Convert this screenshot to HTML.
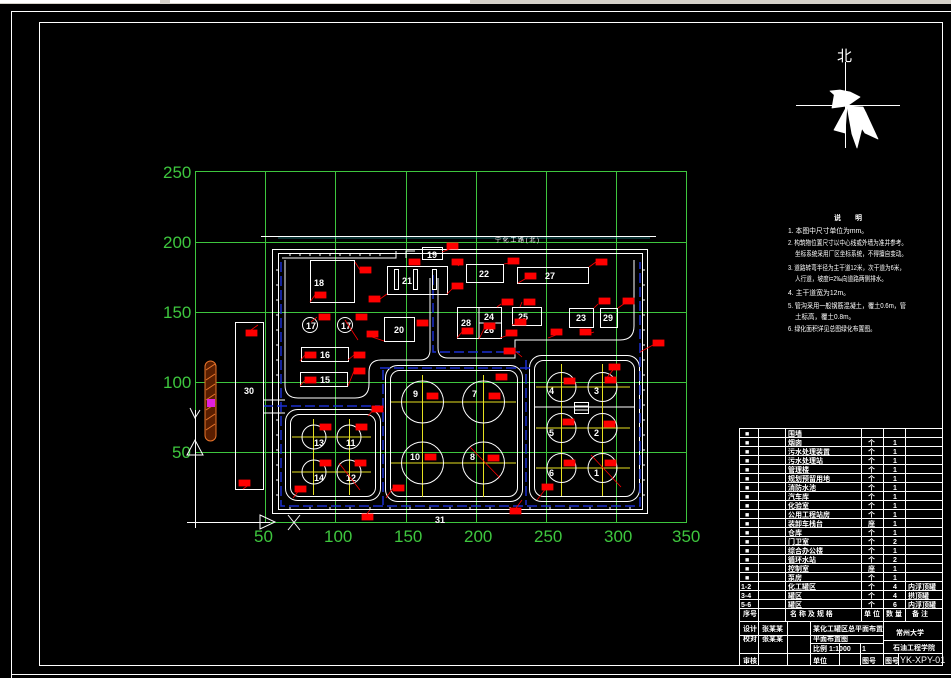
<!DOCTYPE html>
<html><head><meta charset="utf-8"><style>
html,body{margin:0;padding:0;background:#000;width:951px;height:678px;overflow:hidden}
svg{display:block}
text{font-family:"Liberation Sans","Noto Sans CJK SC",sans-serif}
</style></head><body>
<svg width="951" height="678" viewBox="0 0 951 678" xmlns="http://www.w3.org/2000/svg">
<rect width="951" height="678" fill="#000"/>
<rect x="0" y="0" width="951" height="4" fill="#d4d0c8"/>
<rect x="0" y="0" width="160" height="3" fill="#fff"/>
<rect x="170" y="0" width="300" height="3" fill="#fff"/>
<!-- frames -->
<path d="M11.5 678V11.5H951M11 674.5H951" fill="none" stroke="#fff" stroke-width="1"/>
<rect x="39.5" y="22.5" width="903" height="643" fill="none" stroke="#fff" stroke-width="1"/>

<!-- green grid -->
<g stroke="#3ec63e" stroke-width="1" fill="none">
<rect x="195.5" y="171.5" width="491" height="351"/>
<path d="M265.5 171V523M335.5 171V523M406.5 171V523M476.5 171V523M546.5 171V523M616.5 171V523M195 242.5H687M195 312.5H687M195 382.5H687M195 452.5H687"/>
</g>
<g fill="#3ec63e" font-size="17" font-family="Liberation Sans">
<text x="163" y="178">250</text><text x="163" y="248">200</text><text x="163" y="318">150</text><text x="163" y="388">100</text><text x="172" y="458">50</text>
<text x="254" y="542">50</text><text x="324" y="542">100</text><text x="394" y="542">150</text><text x="464" y="542">200</text><text x="534" y="542">250</text><text x="604" y="542">300</text><text x="672" y="542">350</text>
</g>
<!-- axis -->
<g stroke="#fff" fill="none" stroke-width="1">
<path d="M195.5 410V528M187 522.5H270"/>
<path d="M187 455L195 440L203 455Z"/>
<path d="M260 515L275 522L260 529Z"/>
<path d="M288 515L300 530M300 515L288 530"/>
<path d="M190 408L195 418L200 410"/>
</g>

<path d="M261 236.5H656" stroke="#fff" stroke-width="1"/>
<path d="M278 238H650" stroke="#2aa" stroke-width="1" opacity=".6"/>
<text x="495" y="242" fill="#fff" font-size="6">宁 化 工 路 ( 北 )</text>

<g fill="none" stroke="#fff" stroke-width="1">
<rect x="272.5" y="249.5" width="375" height="264"/>
<rect x="278.5" y="253.5" width="364" height="256"/>
<path d="M282 258H396V251M406 258V251H415"/>
<path d="M285 260V385Q285 398 298 398H355Q369 398 369 384V372Q369 360 381 360H420Q430 360 430 350V278"/>
<path d="M438 278V348Q438 358 448 358H515V340H620Q634 340 634 326V260"/>
<rect x="285.5" y="409.5" width="95" height="91" rx="12"/>
<rect x="290.5" y="414.5" width="85" height="82" rx="9"/>
<rect x="385.5" y="365.5" width="137" height="136" rx="12"/>
<rect x="390.5" y="370.5" width="127" height="126" rx="9"/>
<rect x="529.5" y="355.5" width="110" height="146" rx="12"/>
<rect x="534.5" y="360.5" width="100" height="136" rx="9"/>
<path d="M263 400H285M263 413H285"/>
</g>
<g fill="none" stroke="#1a2fd0" stroke-width="1.5" stroke-dasharray="10 4">
<path d="M281 262V506H640V262"/>
<path d="M433 275V352H520"/>
<path d="M263 406H380M380 368H530"/>
<path d="M526 360V505M383 370V505"/>
</g>
<g stroke="#fff" stroke-width="1">
<path d="M276 270h3M276 285h3M276 300h3M276 315h3M276 330h3M276 345h3M276 360h3M276 375h3M276 420h3M276 435h3M276 450h3M276 465h3M276 480h3M276 495h3"/>
<path d="M642 270h3M642 285h3M642 300h3M642 315h3M642 330h3M642 345h3M642 360h3M642 375h3M642 390h3M642 405h3M642 420h3M642 435h3M642 450h3M642 465h3M642 480h3M642 495h3"/>
<path d="M290 253v3M300 253v3M310 253v3M320 253v3M330 253v3M340 253v3M350 253v3M360 253v3M370 253v3M380 253v3M290 507v3M310 507v3M330 507v3M350 507v3M370 507v3M390 507v3M410 507v3M430 507v3M450 507v3M470 507v3M490 507v3M510 507v3M530 507v3M550 507v3M570 507v3M590 507v3M610 507v3M630 507v3"/>
</g>

<g fill="none" stroke="#fff" stroke-width="1">
<rect x="310.5" y="260.5" width="44" height="42"/>
<rect x="387.5" y="266.5" width="60" height="28"/>
<rect x="394.5" y="269.5" width="4" height="20"/><rect x="413.5" y="269.5" width="4" height="20"/><rect x="432.5" y="269.5" width="4" height="20"/>
<rect x="422.5" y="247.5" width="20" height="12"/>
<rect x="466.5" y="264.5" width="37" height="18"/>
<rect x="517.5" y="267.5" width="71" height="16"/>
<rect x="384.5" y="317.5" width="30" height="24"/>
<circle cx="310" cy="325" r="7.5"/><circle cx="345" cy="325" r="7.5"/>
<rect x="301.5" y="347.5" width="47" height="14"/>
<rect x="300.5" y="372.5" width="47" height="14"/>
<rect x="457.5" y="307.5" width="44" height="31"/>
<path d="M479 307V338M479 323H501"/>
<rect x="512.5" y="307.5" width="29" height="18"/>
<rect x="569.5" y="308.5" width="24" height="19"/>
<rect x="600.5" y="308.5" width="17" height="19"/>
<rect x="235.5" y="322.5" width="28" height="167"/>
<rect x="574.5" y="402.5" width="14" height="11"/>
<path d="M574 406H588M574 410H588M535 407H634"/>
</g>
<rect x="205" y="361" width="11" height="80" rx="5.5" fill="#5a1e00" stroke="#e8742a"/>
<path d="M206 370l9 -6M206 380l9 -6M206 390l9 -6M206 400l9 -6M206 410l9 -6M206 420l9 -6M206 430l9 -6" stroke="#e8742a" stroke-width="1"/>
<rect x="207" y="399" width="8" height="8" fill="#e020e0"/>

<g stroke="#e6e020" stroke-width="1">
<path d="M391 402H516M391 463H516M422.5 375V497M483.5 375V497"/>
<path d="M536 387H630M536 428H630M536 468H630M561.5 364V496M602.5 364V496"/>
<path d="M292 437H371M292 472H371M313.5 419V495M349.5 419V495"/>
</g>
<g fill="none" stroke="#fff" stroke-width="1">
<circle cx="422.5" cy="402" r="21"/><circle cx="483.5" cy="402" r="21"/><circle cx="422.5" cy="463" r="21"/><circle cx="483.5" cy="463" r="21"/>
<circle cx="561.5" cy="387" r="14.5"/><circle cx="602.5" cy="387" r="14.5"/><circle cx="561.5" cy="428" r="14.5"/><circle cx="602.5" cy="428" r="14.5"/><circle cx="561.5" cy="468" r="14.5"/><circle cx="602.5" cy="468" r="14.5"/>
<circle cx="314" cy="437" r="12"/><circle cx="349" cy="437" r="12"/><circle cx="314" cy="472" r="12"/><circle cx="349" cy="472" r="12"/>
</g>
<g fill="#fff" font-size="9" font-weight="bold" font-family="Liberation Sans">
<text x="314" y="286">18</text><text x="402" y="284">21</text><text x="427" y="258">19</text><text x="479" y="277">22</text><text x="545" y="279">27</text>
<text x="394" y="333">20</text><text x="306" y="329">17</text><text x="341" y="329">17</text><text x="320" y="358">16</text><text x="320" y="383">15</text>
<text x="461" y="326">28</text><text x="484" y="320">24</text><text x="484" y="333">26</text><text x="518" y="320">25</text><text x="576" y="321">23</text><text x="603" y="321">29</text>
<text x="244" y="394">30</text>
<text x="413" y="397">9</text><text x="472" y="397">7</text><text x="410" y="460">10</text><text x="470" y="460">8</text>
<text x="549" y="394">4</text><text x="594" y="394">3</text><text x="549" y="436">5</text><text x="594" y="436">2</text><text x="549" y="476">6</text><text x="594" y="476">1</text>
<text x="314" y="446">13</text><text x="346" y="446">11</text><text x="314" y="481">14</text><text x="346" y="481">12</text>
<text x="435" y="523">31</text>
</g>

<g fill="#f00" stroke="#f00" stroke-width="0.8">
<rect x="360" y="267" width="11" height="6"/><rect x="315" y="292" width="11" height="6"/><rect x="369" y="296" width="11" height="6"/><rect x="409" y="259" width="11" height="6"/><rect x="447" y="243" width="11" height="6"/><rect x="452" y="259" width="11" height="6"/><rect x="452" y="283" width="11" height="6"/><rect x="508" y="258" width="11" height="6"/><rect x="525" y="273" width="11" height="6"/><rect x="596" y="259" width="11" height="6"/><rect x="246" y="330" width="11" height="6"/><rect x="319" y="314" width="11" height="6"/><rect x="356" y="314" width="11" height="6"/><rect x="367" y="331" width="11" height="6"/><rect x="417" y="320" width="11" height="6"/><rect x="354" y="352" width="11" height="6"/><rect x="354" y="368" width="11" height="6"/><rect x="305" y="352" width="11" height="6"/><rect x="305" y="377" width="11" height="6"/><rect x="462" y="328" width="11" height="6"/><rect x="484" y="323" width="11" height="6"/><rect x="502" y="299" width="11" height="6"/><rect x="524" y="299" width="11" height="6"/><rect x="515" y="319" width="11" height="6"/><rect x="506" y="330" width="11" height="6"/><rect x="551" y="329" width="11" height="6"/><rect x="580" y="329" width="11" height="6"/><rect x="599" y="298" width="11" height="6"/><rect x="623" y="298" width="11" height="6"/><rect x="653" y="340" width="11" height="6"/><rect x="504" y="348" width="11" height="6"/><rect x="609" y="364" width="11" height="6"/><rect x="496" y="374" width="11" height="6"/><rect x="372" y="406" width="11" height="6"/><rect x="427" y="393" width="11" height="6"/><rect x="489" y="393" width="11" height="6"/><rect x="425" y="454" width="11" height="6"/><rect x="488" y="455" width="11" height="6"/><rect x="564" y="378" width="11" height="6"/><rect x="605" y="377" width="11" height="6"/><rect x="563" y="419" width="11" height="6"/><rect x="604" y="421" width="11" height="6"/><rect x="564" y="460" width="11" height="6"/><rect x="605" y="460" width="11" height="6"/><rect x="542" y="484" width="11" height="6"/><rect x="320" y="424" width="11" height="6"/><rect x="356" y="424" width="11" height="6"/><rect x="320" y="460" width="11" height="6"/><rect x="355" y="460" width="11" height="6"/><rect x="295" y="486" width="11" height="6"/><rect x="393" y="485" width="11" height="6"/><rect x="239" y="480" width="11" height="6"/><rect x="362" y="514" width="11" height="6"/><rect x="510" y="508" width="11" height="6"/>
</g>
<g stroke="#f00" stroke-width="0.8" fill="none">
<path d="M355 262L360 270M310 302L315 295M380 299L387 294M458 246L442 252M463 262L458 266M452 289L447 294M519 261L504 264M525 279L518 283M596 262L589 267M251 330L258 325M317 317L311 322M345 320L358 340M372 337L384 341M348 360L354 355M348 386L354 371M300 361L305 355M300 386L305 380M457 338L462 332M479 339L484 329M501 304L497 307M522 302L520 307M520 322L512 325M506 336L500 338M556 335L548 338M585 335L594 332M598 304L594 308M628 301L618 308M653 345L640 352M515 351L522 357M613 370L605 380M374 409L368 416M470 447L500 478M591 455L621 487M547 487L537 500M339 463L360 490M300 489L293 498M393 488L386 498M250 484L243 489M362 520L370 510M516 508L522 500"/>
</g>

<!-- north arrow -->
<g stroke="#fff" stroke-width="1" fill="none">
<path d="M845.5 62V148M796 105.5H900"/>
</g>
<text x="837" y="61" fill="#fff" font-size="15" font-family="Liberation Sans,Noto Sans CJK SC,sans-serif">北</text>
<g fill="#fff" stroke="#fff" stroke-width="0.8" stroke-linejoin="round">
<path d="M830 91L840 90L850 92L860 97L847 106Z"/>
<path d="M847 106L832 108L835 91Z"/>
<path d="M847 106L866 113L878 139L865 133Z"/>
<path d="M847 106L862 128L857 148L852 134Z"/>
<path d="M847 106L845 133L834 130Z"/>
<path d="M847 106L863 107L866 113Z"/>
</g>

<!-- notes -->
<g fill="#fff" font-size="7" font-family="Liberation Sans,Noto Sans CJK SC,sans-serif">
<text x="834" y="220" font-weight="bold">说　　明</text>
<text x="788" y="233" textLength="80" lengthAdjust="spacingAndGlyphs">1. 本图中尺寸单位为mm。</text>
<text x="788" y="245" textLength="119" lengthAdjust="spacingAndGlyphs">2. 构筑物位置尺寸以中心线或外墙为准并参考。</text>
<text x="795" y="256" textLength="112" lengthAdjust="spacingAndGlyphs">坐标系统采用厂区坐标系统，不得擅自变动。</text>
<text x="788" y="270" textLength="117" lengthAdjust="spacingAndGlyphs">3. 道路转弯半径为主干道12米，次干道为6米，</text>
<text x="795" y="281" textLength="92" lengthAdjust="spacingAndGlyphs">人行道，坡度i=2‰向道路两侧排水。</text>
<text x="788" y="295" textLength="62" lengthAdjust="spacingAndGlyphs">4. 主干道宽为12m。</text>
<text x="788" y="308" textLength="118" lengthAdjust="spacingAndGlyphs">5. 管沟采用一般钢筋混凝土，覆土0.6m，管</text>
<text x="795" y="319" textLength="60" lengthAdjust="spacingAndGlyphs">土标高，覆土0.8m。</text>
<text x="788" y="331" textLength="88" lengthAdjust="spacingAndGlyphs">6. 绿化面积详见总图绿化布置图。</text>
</g>

<!-- table -->
<g stroke="#fff" stroke-width="1" fill="none">
<rect x="739.5" y="428.5" width="203" height="193"/>
<path d="M758.5 428V621M785.5 428V621M861.5 428V621M883.5 428V621M905.5 428V621"/>
<path d="M739 437.5H943M739 446.5H943M739 455.5H943M739 464.5H943M739 473.5H943M739 482.5H943M739 491.5H943M739 500.5H943M739 509.5H943M739 518.5H943M739 527.5H943M739 536.5H943M739 545.5H943M739 554.5H943M739 563.5H943M739 572.5H943M739 581.5H943M739 590.5H943M739 599.5H943M739 608.5H943"/>
<rect x="739.5" y="621.5" width="203" height="44"/>
<path d="M739 635.5H883M810 643.5H883M739 653.5H943M883 640.5H943M758.5 621V665M787.5 621V665M810.5 621V665M883.5 621V665M839.5 643V665M860.5 643V665M898.5 653V665"/>
</g>
<g fill="#fff" font-size="7" font-family="Liberation Sans,Noto Sans CJK SC,sans-serif" font-weight="bold">
<text x="745" y="436">■</text><text x="788" y="436">围墙</text>
<text x="745" y="445">■</text><text x="788" y="445">烟囱</text><text x="868" y="445">个</text><text x="893" y="445">1</text>
<text x="745" y="454">■</text><text x="788" y="454">污水处理装置</text><text x="868" y="454">个</text><text x="893" y="454">1</text>
<text x="745" y="463">■</text><text x="788" y="463">污水处理站</text><text x="868" y="463">个</text><text x="893" y="463">1</text>
<text x="745" y="472">■</text><text x="788" y="472">管理楼</text><text x="868" y="472">个</text><text x="893" y="472">1</text>
<text x="745" y="481">■</text><text x="788" y="481">规划预留用地</text><text x="868" y="481">个</text><text x="893" y="481">1</text>
<text x="745" y="490">■</text><text x="788" y="490">消防水池</text><text x="868" y="490">个</text><text x="893" y="490">1</text>
<text x="745" y="499">■</text><text x="788" y="499">汽车库</text><text x="868" y="499">个</text><text x="893" y="499">1</text>
<text x="745" y="508">■</text><text x="788" y="508">化验室</text><text x="868" y="508">个</text><text x="893" y="508">1</text>
<text x="745" y="517">■</text><text x="788" y="517">公用工程站房</text><text x="868" y="517">个</text><text x="893" y="517">1</text>
<text x="745" y="526">■</text><text x="788" y="526">装卸车栈台</text><text x="868" y="526">座</text><text x="893" y="526">1</text>
<text x="745" y="535">■</text><text x="788" y="535">仓库</text><text x="868" y="535">个</text><text x="893" y="535">1</text>
<text x="745" y="544">■</text><text x="788" y="544">门卫室</text><text x="868" y="544">个</text><text x="893" y="544">2</text>
<text x="745" y="553">■</text><text x="788" y="553">综合办公楼</text><text x="868" y="553">个</text><text x="893" y="553">1</text>
<text x="745" y="562">■</text><text x="788" y="562">循环水站</text><text x="868" y="562">个</text><text x="893" y="562">2</text>
<text x="745" y="571">■</text><text x="788" y="571">控制室</text><text x="868" y="571">座</text><text x="893" y="571">1</text>
<text x="745" y="580">■</text><text x="788" y="580">泵房</text><text x="868" y="580">个</text><text x="893" y="580">1</text>
<text x="741" y="589">1-2</text><text x="788" y="589">化工罐区</text><text x="868" y="589">个</text><text x="893" y="589">4</text><text x="908" y="589">内浮顶罐</text>
<text x="741" y="598">3-4</text><text x="788" y="598">罐区</text><text x="868" y="598">个</text><text x="893" y="598">4</text><text x="908" y="598">拱顶罐</text>
<text x="741" y="607">5-6</text><text x="788" y="607">罐区</text><text x="868" y="607">个</text><text x="893" y="607">6</text><text x="908" y="607">内浮顶罐</text>
<text x="743" y="616">序号</text><text x="790" y="616">名 称 及 规 格</text><text x="864" y="616">单 位</text><text x="886" y="616">数 量</text><text x="912" y="616">备 注</text>
<text x="743" y="631">设计</text><text x="762" y="631">张某某</text><text x="813" y="631">某化工罐区总平面布置</text><text x="896" y="635">常州大学</text>
<text x="743" y="641">校对</text><text x="762" y="641">张某某</text><text x="813" y="641">平面布置图</text><text x="893" y="650">石油工程学院</text>
<text x="813" y="651">比例 1:1000</text><text x="862" y="651">1</text>
<text x="743" y="663">审核</text><text x="813" y="663">单位</text><text x="862" y="663">图号</text><text x="885" y="663">图号</text>
</g>
<text x="900" y="663" fill="#fff" font-size="9" font-family="Liberation Sans">YK-XPY-01</text>
</svg>
</body></html>
